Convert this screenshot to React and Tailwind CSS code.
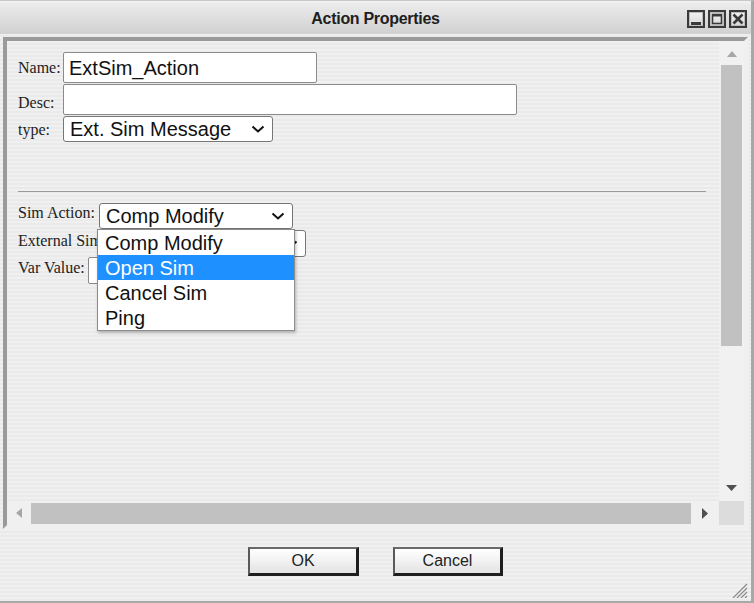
import React from "react";

const Chevron = ({ className = "" }) => (
  <svg width="14" height="8" viewBox="0 0 14 8" className={className}>
    <polyline points="1.5,1.5 7,6.5 12.5,1.5" fill="none" stroke="#111" strokeWidth="2" />
  </svg>
);

const TitleBtn = ({ kind }) => (
  <svg width="18" height="18" viewBox="0 0 18 18">
    <defs>
      <linearGradient id={"tb" + kind} x1="0" y1="0" x2="0" y2="1">
        <stop offset="0" stopColor="#f4f4f4" />
        <stop offset="1" stopColor="#d6d6d6" />
      </linearGradient>
    </defs>
    <rect x="1" y="1" width="16" height="16" fill={"url(#tb" + kind + ")"} stroke="#3a3a3a" strokeWidth="2" />
    <rect x="2.5" y="2.5" width="13" height="13" fill="none" stroke="#bdbdbd" strokeWidth="1" />
    {kind === "min" && <rect x="4" y="12" width="10" height="3" fill="#3a3a3a" />}
    {kind === "max" && (
      <>
        <rect x="4.5" y="4.5" width="9" height="9" fill="none" stroke="#3a3a3a" strokeWidth="1.6" />
        <rect x="4" y="4" width="10" height="2.5" fill="#3a3a3a" />
      </>
    )}
    {kind === "close" && (
      <path d="M4.5 4.5 L13.5 13.5 M13.5 4.5 L4.5 13.5" stroke="#3a3a3a" strokeWidth="2.6" />
    )}
  </svg>
);

const Label = ({ children, className = "" }) => (
  <span
    className={
      "shrink-0 whitespace-nowrap overflow-hidden text-[16px] leading-[18px] text-[#222] font-['Liberation_Serif','Times_New_Roman',serif] " +
      className
    }
  >
    {children}
  </span>
);

const Select = ({ value, className = "" }) => (
  <div
    className={
      "shrink-0 flex items-center justify-between bg-white border border-[#767676] rounded-[3px] pl-[6px] pr-[7px] text-[20px] leading-[22px] text-[#111] " +
      className
    }
  >
    <span className="whitespace-nowrap">{value}</span>
    <Chevron />
  </div>
);

const Input = ({ value = "", className = "" }) => (
  <div
    className={
      "shrink-0 flex items-center bg-white border border-[#8a8a8a] rounded-[2px] pl-[5px] text-[20px] leading-[22px] text-[#111] " +
      className
    }
  >
    {value}
  </div>
);

export default function App() {
  return (
    <div className="w-[754px] h-[603px] flex flex-col overflow-hidden border-t border-t-[#c8c8c8] border-r-[3px] border-r-[#a8a8a8] border-b-[2px] border-b-[#a8a8a8] bg-[repeating-linear-gradient(to_bottom,#f0f0f0_0px,#f0f0f0_2px,#eaeaea_2px,#eaeaea_4px)] font-['Liberation_Sans',Arial,sans-serif]">
      {/* Title bar */}
      <div className="mt-[2px] h-[31px] grid grid-cols-[1fr_auto_1fr] items-center bg-[linear-gradient(to_bottom,#ececec,#d0d0d0)]">
        <div />
        <div className="text-[16px] font-bold text-[#1e1e1e] tracking-[-0.3px]">Action Properties</div>
        <div className="flex justify-end gap-[3px] pr-[4px]">
          <TitleBtn kind="min" />
          <TitleBtn kind="max" />
          <TitleBtn kind="close" />
        </div>
      </div>

      {/* Panel */}
      <div className="mt-[3px] ml-[3px] w-[745px] h-[492px] border-[4px] border-t-[#9a9a9a] border-l-[#9a9a9a] border-r-[#f0f0f0] border-b-[#f0f0f0] grid grid-cols-[712px_25px] grid-rows-[460px_24px]">
        {/* Content */}
        <div className="relative pl-[11px] pt-[11px] pr-[13px]">
          <div className="flex items-center h-[31px]">
            <Label className="w-[45px]">Name:</Label>
            <Input value="ExtSim_Action" className="w-[254px] h-[31px]" />
          </div>
          <div className="flex items-center h-[31px] mt-px">
            <Label className="w-[45px] pt-[6px]">Desc:</Label>
            <Input className="w-[454px] h-[31px]" />
          </div>
          <div className="flex items-center h-[26px] mt-px">
            <Label className="w-[45px] pt-[2px]">type:</Label>
            <Select value="Ext. Sim Message" className="w-[210px] h-[26px]" />
          </div>

          <div className="mt-[49px] h-px bg-[#9a9a9a]" />

          <div className="relative flex items-center h-[26px] mt-[11px]">
            <Label className="w-[81px] pb-[6px]">Sim Action:</Label>
            <Select value="Comp Modify" className="w-[194px] h-[26px]" />
            {/* Open dropdown list */}
            <div className="absolute left-[79px] top-[26px] z-10 w-[198px] bg-white border border-[#8c8c8c] shadow-[1px_2px_3px_rgba(0,0,0,0.25)] text-[20px] leading-[22px] text-[#111]">
              <div className="h-[25px] flex items-center pl-[7px]">Comp Modify</div>
              <div className="h-[25px] flex items-center pl-[7px] bg-[#1e90ff] text-white">Open Sim</div>
              <div className="h-[25px] flex items-center pl-[7px]">Cancel Sim</div>
              <div className="h-[25px] flex items-center pl-[7px]">Ping</div>
            </div>
          </div>
          <div className="flex items-center h-[27px] mt-px">
            <Label className="w-[80px] pb-[6px]">External Sim</Label>
            <Select value="" className="w-[208px] h-[27px]" />
          </div>
          <div className="flex items-center h-[27px]">
            <Label className="w-[70px] pb-[6px]">Var Value:</Label>
            <Input className="w-[200px] h-[27px]" />
          </div>
        </div>

        {/* Vertical scrollbar */}
        <div className="flex flex-col bg-[#f1f1f1]">
          <div className="h-[24px] flex items-start justify-center pt-[10px]">
            <svg width="10" height="6" viewBox="0 0 10 6">
              <polygon points="0,6 5,0 10,6" fill="#a6a6a6" />
            </svg>
          </div>
          <div className="mx-[2px] h-[281px] bg-[#c1c1c1]" />
          <div className="flex-1" />
          <div className="h-[22px] flex items-start justify-center pt-[6px]">
            <svg width="11" height="6" viewBox="0 0 11 6">
              <polygon points="0,0 11,0 5.5,6" fill="#505050" />
            </svg>
          </div>
        </div>

        {/* Horizontal scrollbar */}
        <div className="flex bg-[#f0f0f0]">
          <div className="w-[24px] flex items-center justify-center">
            <svg width="6" height="10" viewBox="0 0 6 10">
              <polygon points="6,0 0,5 6,10" fill="#a6a6a6" />
            </svg>
          </div>
          <div className="w-[660px] mt-[2px] h-[21px] bg-[#c1c1c1]" />
          <div className="flex-1 flex items-center justify-center">
            <svg width="6" height="11" viewBox="0 0 6 11">
              <polygon points="0,0 6,5.5 0,11" fill="#505050" />
            </svg>
          </div>
        </div>
        <div className="bg-[#dcdcdc]" />
      </div>

      {/* Buttons */}
      <div className="relative flex-1 flex justify-center items-start gap-[34px] pt-[18px]">
        {["OK", "Cancel"].map((t, i) => (
          <div
            key={t}
            className={
              (i === 0 ? "w-[111px] " : "w-[110px] ") +
              "h-[29px] flex items-center justify-center border-t-[2px] border-l-[2px] border-t-[#6a6a6a] border-l-[#5a5a5a] border-r-[3px] border-b-[3px] border-r-[#1e1e1e] border-b-[#1e1e1e] bg-[linear-gradient(to_bottom,#ffffff,#f3f3f3_45%,#e2e2e2)] text-[16px] text-[#222]"
            }
          >
            {t}
          </div>
        ))}
        <svg className="absolute right-[3px] bottom-[3px]" width="17" height="16" viewBox="0 0 17 16">
          <path d="M16 2 L2 16 M16 6 L6 16 M16 10 L10 16 M16 14 L14 16" stroke="#8a8a8a" strokeWidth="1.2" />
        </svg>
      </div>
    </div>
  );
}
